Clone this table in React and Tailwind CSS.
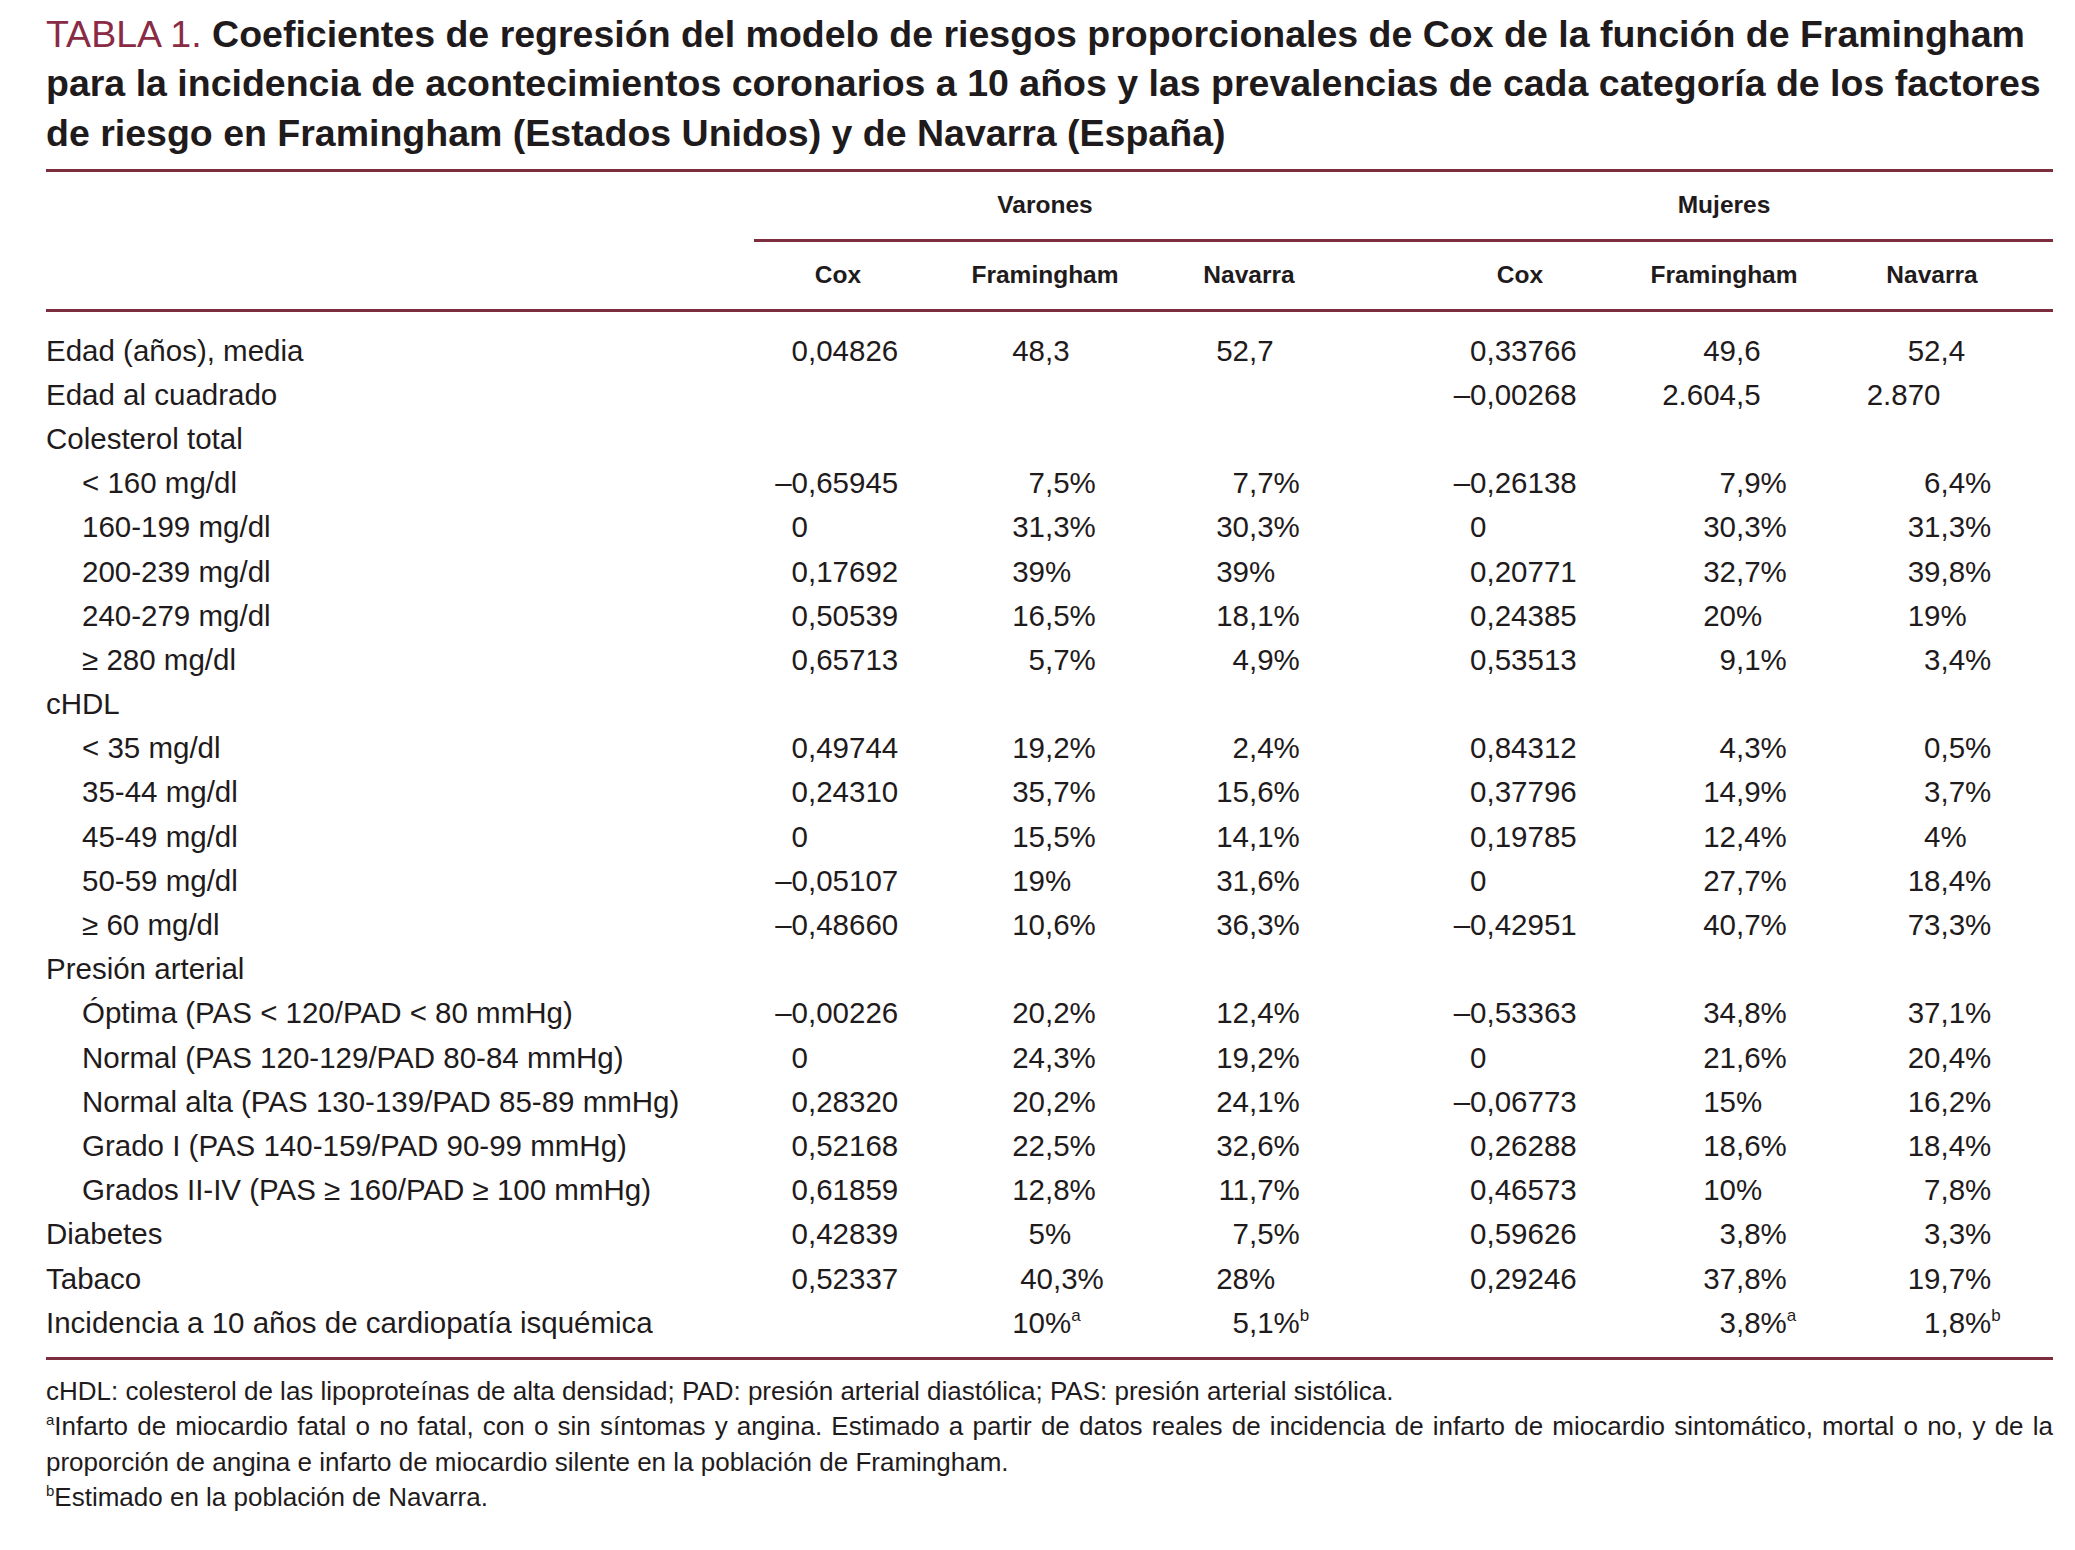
import React from 'react';

const rows = [
  { label: 'Edad (años), media', vals: ['0,04826', '48,3', '52,7', '0,33766', '49,6', '52,4'] },
  { label: 'Edad al cuadrado', vals: ['', '', '', '–0,00268', '2.604,5', '2.870'] },
  { label: 'Colesterol total' },
  { label: '< 160 mg/dl', sub: true, vals: ['–0,65945', '7,5%', '7,7%', '–0,26138', '7,9%', '6,4%'] },
  { label: '160-199 mg/dl', sub: true, vals: ['0', '31,3%', '30,3%', '0', '30,3%', '31,3%'] },
  { label: '200-239 mg/dl', sub: true, vals: ['0,17692', '39%', '39%', '0,20771', '32,7%', '39,8%'] },
  { label: '240-279 mg/dl', sub: true, vals: ['0,50539', '16,5%', '18,1%', '0,24385', '20%', '19%'] },
  { label: '≥ 280 mg/dl', sub: true, vals: ['0,65713', '5,7%', '4,9%', '0,53513', '9,1%', '3,4%'] },
  { label: 'cHDL' },
  { label: '< 35 mg/dl', sub: true, vals: ['0,49744', '19,2%', '2,4%', '0,84312', '4,3%', '0,5%'] },
  { label: '35-44 mg/dl', sub: true, vals: ['0,24310', '35,7%', '15,6%', '0,37796', '14,9%', '3,7%'] },
  { label: '45-49 mg/dl', sub: true, vals: ['0', '15,5%', '14,1%', '0,19785', '12,4%', '4%'] },
  { label: '50-59 mg/dl', sub: true, vals: ['–0,05107', '19%', '31,6%', '0', '27,7%', '18,4%'] },
  { label: '≥ 60 mg/dl', sub: true, vals: ['–0,48660', '10,6%', '36,3%', '–0,42951', '40,7%', '73,3%'] },
  { label: 'Presión arterial' },
  { label: 'Óptima (PAS < 120/PAD < 80 mmHg)', sub: true, vals: ['–0,00226', '20,2%', '12,4%', '–0,53363', '34,8%', '37,1%'] },
  { label: 'Normal (PAS 120-129/PAD 80-84 mmHg)', sub: true, vals: ['0', '24,3%', '19,2%', '0', '21,6%', '20,4%'] },
  { label: 'Normal alta (PAS 130-139/PAD 85-89 mmHg)', sub: true, vals: ['0,28320', '20,2%', '24,1%', '–0,06773', '15%', '16,2%'] },
  { label: 'Grado I (PAS 140-159/PAD 90-99 mmHg)', sub: true, vals: ['0,52168', '22,5%', '32,6%', '0,26288', '18,6%', '18,4%'] },
  { label: 'Grados II-IV (PAS ≥ 160/PAD ≥ 100 mmHg)', sub: true, vals: ['0,61859', '12,8%', '11,7%', '0,46573', '10%', '7,8%'] },
  { label: 'Diabetes', vals: ['0,42839', '5%', '7,5%', '0,59626', '3,8%', '3,3%'] },
  { label: 'Tabaco', vals: ['0,52337', '40,3%', '28%', '0,29246', '37,8%', '19,7%'], shift: { 1: 'ml-[8px]' } },
  {
    label: 'Incidencia a 10 años de cardiopatía isquémica',
    vals: ['', '10%', '5,1%', '', '3,8%', '1,8%'],
    sups: { 1: 'a', 2: 'b', 4: 'a', 5: 'b' },
  },
];

// integer part sits right-aligned in a fixed box so the commas line up
const Num = ({ v, sup, className = '' }) => {
  if (!v) return <div />;
  const m = v.match(/^([–-]?[\d.]+)(.*)$/);
  return (
    <div className={`flex whitespace-nowrap ${className}`}>
      <span className="w-[90px] shrink-0 text-right">{m[1]}</span>
      <span>
        {m[2]}
        {sup && <sup className="text-[17px] -top-[12px]">{sup}</sup>}
      </span>
    </div>
  );
};

const Rule = ({ className = '' }) => <div className={`h-[3px] bg-[#7c2e3f] ${className}`} />;

export default function App() {
  return (
    <div className="min-h-screen bg-white text-[#1f1b1c] font-['Liberation_Sans',Arial,Helvetica,sans-serif]">
      <div className="ml-[46px] w-[2007px] pt-[9.5px]">
        <h1 className="text-[37.5px] leading-[49.5px] whitespace-nowrap">
          <span className="block">
            <span className="text-[#8a2b45]">TABLA 1. </span>
            <span className="font-bold">
              Coeficientes de regresión del modelo de riesgos proporcionales de Cox de la función de Framingham
            </span>
          </span>
          <span className="block font-bold">
            para la incidencia de acontecimientos coronarios a 10 años y las prevalencias de cada categoría de los factores
          </span>
          <span className="block font-bold">
            de riesgo en Framingham (Estados Unidos) y de Navarra (España)
          </span>
        </h1>

        <Rule className="mt-[10.5px]" />

        <div className="flex h-[67.7px] items-center text-[24.5px] font-bold">
          <div className="w-[799px] shrink-0" />
          <div className="w-[400px] text-center">Varones</div>
          <div className="w-[279px] shrink-0" />
          <div className="w-[400px] text-center">Mujeres</div>
        </div>
        <Rule className="ml-[708px]" />

        <div className="flex h-[67.3px] items-center text-[24.5px] font-bold">
          <div className="w-[692px] shrink-0" />
          <div className="w-[200px] text-center">Cox</div>
          <div className="ml-[7px] w-[200px] text-center">Framingham</div>
          <div className="ml-[4px] w-[200px] text-center">Navarra</div>
          <div className="ml-[71px] w-[200px] text-center">Cox</div>
          <div className="ml-[4px] w-[200px] text-center">Framingham</div>
          <div className="ml-[8px] w-[200px] text-center">Navarra</div>
        </div>
        <Rule />

        <div className="pt-[16.1px] text-[29.5px]">
          {rows.map((r, i) => (
            <div
              key={i}
              className="grid h-[44.2px] grid-cols-[672px_237px_204px_237.5px_249.5px_204.5px_202.5px] items-center leading-[44.2px]"
            >
              <div className={`whitespace-nowrap ${r.sub ? 'pl-[36px]' : ''}`}>{r.label}</div>
              {(r.vals || ['', '', '', '', '', '']).map((v, j) => (
                <Num key={j} v={v} sup={r.sups?.[j]} className={r.shift?.[j] || ''} />
              ))}
            </div>
          ))}
        </div>

        <Rule className="mt-[12.3px]" />

        <div className="mt-[13.8px] text-[26px] leading-[35.4px]">
          <p className="whitespace-nowrap">
            cHDL: colesterol de las lipoproteínas de alta densidad; PAD: presión arterial diastólica; PAS: presión arterial sistólica.
          </p>
          <p className="whitespace-nowrap [text-align-last:justify]">
            <sup className="text-[15px] -top-[10px]">a</sup>Infarto de miocardio fatal o no fatal, con o sin síntomas y angina. Estimado a partir de datos reales de incidencia de infarto de miocardio sintomático, mortal o no, y de la
          </p>
          <p className="whitespace-nowrap">
            proporción de angina e infarto de miocardio silente en la población de Framingham.
          </p>
          <p className="whitespace-nowrap">
            <sup className="text-[15px] -top-[10px]">b</sup>Estimado en la población de Navarra.
          </p>
        </div>
      </div>
    </div>
  );
}
